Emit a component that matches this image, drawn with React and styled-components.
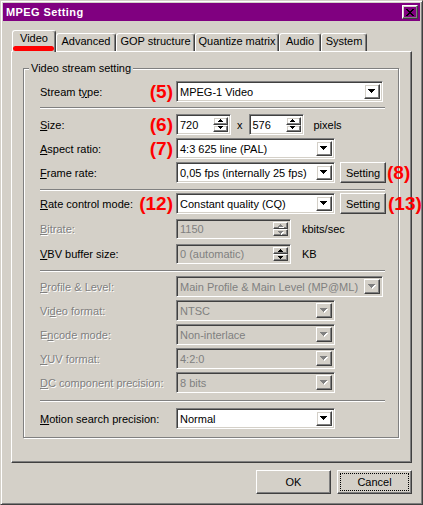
import React from 'react';
import styled, { createGlobalStyle, css } from 'styled-components';

const Global = createGlobalStyle`
  html, body { margin: 0; padding: 0; background: #D4D0C8; }
  body { font-family: "Liberation Sans", Arial, sans-serif; font-size: 11px; color: #000; }
  * { box-sizing: border-box; }
`;

const raised = css`
  border: 1px solid;
  border-color: #fff #404040 #404040 #fff;
  box-shadow: inset -1px -1px #808080, inset 1px 1px #D4D0C8;
`;
const sunken = css`
  border: 1px solid;
  border-color: #808080 #fff #fff #808080;
  box-shadow: inset 1px 1px #404040, inset -1px -1px #D4D0C8;
`;

const Window = styled.div`
  width: 423px;
  height: 505px;
  background: #D4D0C8;
  border: 1px solid;
  border-color: #D4D0C8 #404040 #404040 #D4D0C8;
  box-shadow: inset 1px 1px #fff, inset -1px -1px #808080;
  padding: 2px;
  display: flex;
  flex-direction: column;
`;

const TitleBar = styled.div`
  height: 18px;
  background: #800080;
  display: flex;
  align-items: center;
  justify-content: space-between;
  padding: 0 2px 0 3px;
  color: #fff;
  font-weight: bold;
  font-size: 11px;
  letter-spacing: 0.4px;
`;

const CloseBtn = styled.div`
  ${raised};
  width: 16px;
  height: 14px;
  display: flex;
  align-items: center;
  justify-content: center;
`;

const Content = styled.div`
  display: flex;
  flex-direction: column;
  padding: 0 8px;
`;

const TabStrip = styled.div`
  display: flex;
  align-items: flex-end;
  height: 21px;
  margin-top: 9px;
  padding-left: 1px;
`;

const Tab = styled.div`
  position: relative;
  z-index: ${p => (p.$active ? 2 : 0)};
  width: ${p => p.$w}px;
  height: ${p => (p.$active ? 22 : 18)}px;
  margin-bottom: ${p => (p.$active ? -1 : 0)}px;
  background: #D4D0C8;
  border-top: 1px solid #fff;
  border-left: 1px solid #fff;
  border-right: 1px solid #404040;
  box-shadow: inset -1px 0 #808080;
  border-radius: 3px 3px 0 0;
  display: flex;
  justify-content: center;
  align-items: flex-start;
  padding-top: 1px;
  white-space: nowrap;
`;

const RedMark = styled.div`
  position: absolute;
  left: 0;
  top: 15px;
  width: 41px;
  height: 5px;
  border-radius: 3px;
  background: #ff0000;
`;

const Panel = styled.div`
  height: 412px;
  border: 1px solid;
  border-color: #fff #404040 #404040 #fff;
  box-shadow: inset -1px -1px #808080;
  padding: 16px 12px 0 11px;
`;

const Group = styled.div`
  position: relative;
  border: 1px solid #808080;
  box-shadow: inset 1px 1px #fff, 1px 1px #fff;
  padding: 12px 14px 8px 16px;
  display: flex;
  flex-direction: column;
`;

const Legend = styled.span`
  position: absolute;
  left: 5px;
  top: -7px;
  padding: 0 2px;
  background: #D4D0C8;
  line-height: 13px;
`;

const Row = styled.div`
  display: flex;
  align-items: center;
  height: ${p => p.$h || 21}px;
  margin-top: ${p => p.$mt || 0}px;
`;

const LabelCell = styled.div`
  width: 136px;
  flex: none;
  height: 100%;
  display: flex;
  align-items: center;
  justify-content: space-between;
  padding-right: 3px;
`;

const Label = styled.span`
  white-space: nowrap;
  color: ${p => (p.$disabled ? '#808080' : '#000')};
  text-shadow: ${p => (p.$disabled ? '1px 1px 0 #fff' : 'none')};
`;

const Marker = styled.span`
  color: #ff0000;
  font: bold 19px/1 "Liberation Sans", Arial, sans-serif;
  white-space: nowrap;
  margin-left: ${p => p.$ml || 0}px;
`;

const Sep = styled.div`
  height: 2px;
  border-top: 1px solid #808080;
  border-bottom: 1px solid #fff;
  margin: ${p => p.$mt}px -1px ${p => p.$mb}px 0;
`;

const Field = styled.div`
  ${sunken};
  width: ${p => p.$w}px;
  height: 100%;
  flex: none;
  display: flex;
  align-items: stretch;
  padding: 2px;
  background: ${p => (p.$face ? '#D4D0C8' : '#fff')};
`;

const FieldText = styled.div`
  flex: 1;
  display: flex;
  align-items: center;
  padding-left: 1px;
  white-space: nowrap;
  overflow: hidden;
  color: ${p => (p.$gray ? '#808080' : '#000')};
`;

const DropBtn = styled.div`
  ${raised};
  width: 16px;
  flex: none;
  display: flex;
  align-items: center;
  justify-content: center;
`;

const SpinCol = styled.div`
  width: 15px;
  flex: none;
  display: flex;
  flex-direction: column;
`;

const SpinHalf = styled.div`
  ${raised};
  flex: 1;
  display: flex;
  align-items: center;
  justify-content: center;
`;

const Unit = styled.span`
  margin: 0 ${p => p.$mr || 0}px 0 ${p => p.$ml || 0}px;
  white-space: nowrap;
`;

const Button = styled.div`
  ${raised};
  width: ${p => p.$w}px;
  height: ${p => p.$h}px;
  flex: none;
  display: flex;
  align-items: center;
  justify-content: center;
  margin-left: ${p => p.$ml || 0}px;
  outline: ${p => (p.$focus ? '1px dotted #000' : 'none')};
  outline-offset: -4px;
`;

const ButtonRow = styled.div`
  display: flex;
  justify-content: flex-end;
  gap: 6px;
  margin-top: 7px;
`;

const Arrow = ({ disabled }) => (
  <svg width="8" height="5" viewBox="0 0 8 5" shapeRendering="crispEdges">
    {disabled && <path transform="translate(1,1)" d="M0 0h7v1H0z M1 1h5v1H1z M2 2h3v1H2z M3 3h1v1H3z" fill="#fff" />}
    <path d="M0 0h7v1H0z M1 1h5v1H1z M2 2h3v1H2z M3 3h1v1H3z" fill={disabled ? '#808080' : '#000'} />
  </svg>
);

const SpinArrow = ({ up, disabled }) => (
  <svg width="6" height="4" viewBox="0 0 6 4" shapeRendering="crispEdges">
    {disabled && (
      <path transform="translate(1,1)" d={up ? 'M2 0h1v1H2z M1 1h3v1H1z M0 2h5v1H0z' : 'M0 0h5v1H0z M1 1h3v1H1z M2 2h1v1H2z'} fill="#fff" />
    )}
    <path d={up ? 'M2 0h1v1H2z M1 1h3v1H1z M0 2h5v1H0z' : 'M0 0h5v1H0z M1 1h3v1H1z M2 2h1v1H2z'} fill={disabled ? '#808080' : '#000'} />
  </svg>
);

const Combo = ({ w, value, disabled }) => (
  <Field $w={w} $face={disabled}>
    <FieldText $gray={disabled}>{value}</FieldText>
    <DropBtn><Arrow disabled={disabled} /></DropBtn>
  </Field>
);

const Spin = ({ w, value, face, gray, disabled }) => (
  <Field $w={w} $face={face}>
    <FieldText $gray={gray}>{value}</FieldText>
    <SpinCol>
      <SpinHalf><SpinArrow up disabled={disabled} /></SpinHalf>
      <SpinHalf><SpinArrow disabled={disabled} /></SpinHalf>
    </SpinCol>
  </Field>
);

const LabelWith = ({ children, marker, disabled }) => (
  <LabelCell>
    <Label $disabled={disabled}>{children}</Label>
    {marker && <Marker>{marker}</Marker>}
  </LabelCell>
);

const tabs = [
  { t: 'Video', w: 44, active: true },
  { t: 'Advanced', w: 60 },
  { t: 'GOP structure', w: 79 },
  { t: 'Quantize matrix', w: 84 },
  { t: 'Audio', w: 42 },
  { t: 'System', w: 46 },
];

const disabledRows = [
  { label: <>Vi<u>d</u>eo format:</>, value: 'NTSC' },
  { label: <>E<u>n</u>code mode:</>, value: 'Non-interlace' },
  { label: <><u>Y</u>UV format:</>, value: '4:2:0' },
  { label: <><u>D</u>C component precision:</>, value: '8 bits' },
];

export default function App() {
  return (
    <>
      <Global />
      <Window>
        <TitleBar>
          <span>MPEG Setting</span>
          <CloseBtn>
            <svg width="8" height="7" viewBox="0 0 8 7" shapeRendering="crispEdges">
              <path d="M0 0h2v1H0z M1 1h2v1H1z M2 2h2v1H2z M3 3h2v1H3z M2 4h2v1H2z M1 5h2v1H1z M0 6h2v1H0z M6 0h2v1H6z M5 1h2v1H5z M4 2h2v1H4z M4 4h2v1H4z M5 5h2v1H5z M6 6h2v1H6z" fill="#000" />
            </svg>
          </CloseBtn>
        </TitleBar>
        <Content>
          <TabStrip>
            {tabs.map(tb => (
              <Tab key={tb.t} $w={tb.w} $active={tb.active}>
                {tb.t}
                {tb.active && <RedMark />}
              </Tab>
            ))}
          </TabStrip>
          <Panel>
            <Group>
              <Legend>Video stream setting</Legend>
              <Row>
                <LabelWith marker="(5)">Stream t<u>y</u>pe:</LabelWith>
                <Combo w={207} value="MPEG-1 Video" />
              </Row>
              <Sep $mt={5} $mb={5} />
              <Row>
                <LabelWith marker="(6)"><u>S</u>ize:</LabelWith>
                <Spin w={55} value="720" />
                <Unit $ml={6} $mr={6}>x</Unit>
                <Spin w={55} value="576" />
                <Unit $ml={10}>pixels</Unit>
              </Row>
              <Row $mt={3}>
                <LabelWith marker="(7)"><u>A</u>spect ratio:</LabelWith>
                <Combo w={159} value="4:3 625 line (PAL)" />
              </Row>
              <Row $mt={3}>
                <LabelWith><u>F</u>rame rate:</LabelWith>
                <Combo w={159} value="0,05 fps (internally 25 fps)" />
                <Button $w={46} $h={21} $ml={5}>Setting</Button>
                <Marker $ml={1}>(8)</Marker>
              </Row>
              <Sep $mt={6} $mb={2} />
              <Row>
                <LabelWith marker="(12)"><u>R</u>ate control mode:</LabelWith>
                <Combo w={159} value="Constant quality (CQ)" />
                <Button $w={46} $h={21} $ml={5}>Setting</Button>
                <Marker $ml={2}>(13)</Marker>
              </Row>
              <Row $mt={5} $h={20}>
                <LabelWith disabled><u>B</u>itrate:</LabelWith>
                <Spin w={115} value="1150" face gray disabled />
                <Unit $ml={11}>kbits/sec</Unit>
              </Row>
              <Row $mt={5} $h={20}>
                <LabelWith><u>V</u>BV buffer size:</LabelWith>
                <Spin w={115} value="0 (automatic)" face gray />
                <Unit $ml={11}>KB</Unit>
              </Row>
              <Sep $mt={6} $mb={4} />
              <Row>
                <LabelWith disabled><u>P</u>rofile &amp; Level:</LabelWith>
                <Combo w={207} value="Main Profile & Main Level (MP@ML)" disabled />
              </Row>
              {disabledRows.map((r, i) => (
                <Row key={i} $mt={3}>
                  <LabelWith disabled>{r.label}</LabelWith>
                  <Combo w={159} value={r.value} disabled />
                </Row>
              ))}
              <Sep $mt={7} $mb={6} />
              <Row>
                <LabelWith><u>M</u>otion search precision:</LabelWith>
                <Combo w={159} value="Normal" />
              </Row>
            </Group>
          </Panel>
          <ButtonRow>
            <Button $w={75} $h={24}>OK</Button>
            <Button $w={75} $h={24} $focus>Cancel</Button>
          </ButtonRow>
        </Content>
      </Window>
    </>
  );
}
